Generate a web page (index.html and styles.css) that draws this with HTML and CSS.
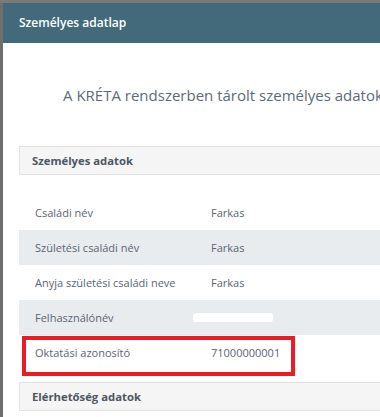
FILE: index.html
```html
<!DOCTYPE html>
<html lang="hu">
<head>
  <meta charset="UTF-8" />
  <title>Személyes adatlap</title>
  <link rel="stylesheet" href="styles.css">
</head>
<body>
  <div class="backdrop-top"></div>
  <div class="modal">
    <header class="modal-header">Személyes adatlap</header>
    <div class="modal-body">
      <p class="intro">A KRÉTA rendszerben tárolt személyes adatok</p>

      <div class="panel-title">Személyes adatok</div>
      <div class="rows">
        <div class="row"><span class="label">Családi név</span><span class="value">Farkas</span></div>
        <div class="row alt"><span class="label">Születési családi név</span><span class="value">Farkas</span></div>
        <div class="row"><span class="label">Anyja születési családi neve</span><span class="value">Farkas</span></div>
        <div class="row alt"><span class="label">Felhasználónév</span><span class="value"><span class="redacted"></span></span></div>
        <div class="row marked"><span class="label">Oktatási azonosító</span><span class="value">71000000001</span></div>
      </div>

      <div class="panel-title">Elérhetőség adatok</div>
    </div>
  </div>
</body>
</html>
```

FILE: styles.css
```css
body {
  margin: 0;
  background: #6f6f6f;
  font-family: 'Open Sans', sans-serif;
  overflow: hidden;
  height: 417px;
}
.backdrop-top {
  height: 3px;
  background: #7a7a7a;
}
.modal {
  margin-left: 3px;
  width: 440px;
  background: #fff;
  height: 420px;
}
.modal-header {
  height: 40px;
  line-height: 40px;
  background: #436a7b;
  color: #fff;
  font-size: 12px;
  font-weight: 600;
  padding-left: 16px;
}
.modal-body {
  padding-left: 16px;
}
.intro {
  margin: 0;
  padding: 41px 0 40px 44px;
  font-size: 15px;
  line-height: 22px;
  color: #5e6a78;
  white-space: nowrap;
}
.panel-title {
  height: 27px;
  line-height: 27px;
  background: #f5f5f5;
  border: 1px solid #e2e2e2;
  padding-left: 12px;
  font-size: 11.3px;
  font-weight: 700;
  color: #4e5763;
}
.rows {
  margin: 20px 0 12px;
}
.row {
  display: flex;
  align-items: center;
  height: 35px;
  font-size: 11px;
  color: #5b6572;
  position: relative;
}
.row.alt {
  background: #e9ecef;
}
.label {
  width: 176px;
  padding-left: 16px;
}
.redacted {
  display: inline-block;
  width: 80px;
  height: 9px;
  background: #fff;
  border-radius: 3px;
  margin-left: -18px;
  margin-top: 2px;
}
.row.marked::after {
  content: "";
  position: absolute;
  left: 3px;
  top: 1px;
  width: 265px;
  height: 32px;
  border: 4px solid #ec1c24;
}
```
